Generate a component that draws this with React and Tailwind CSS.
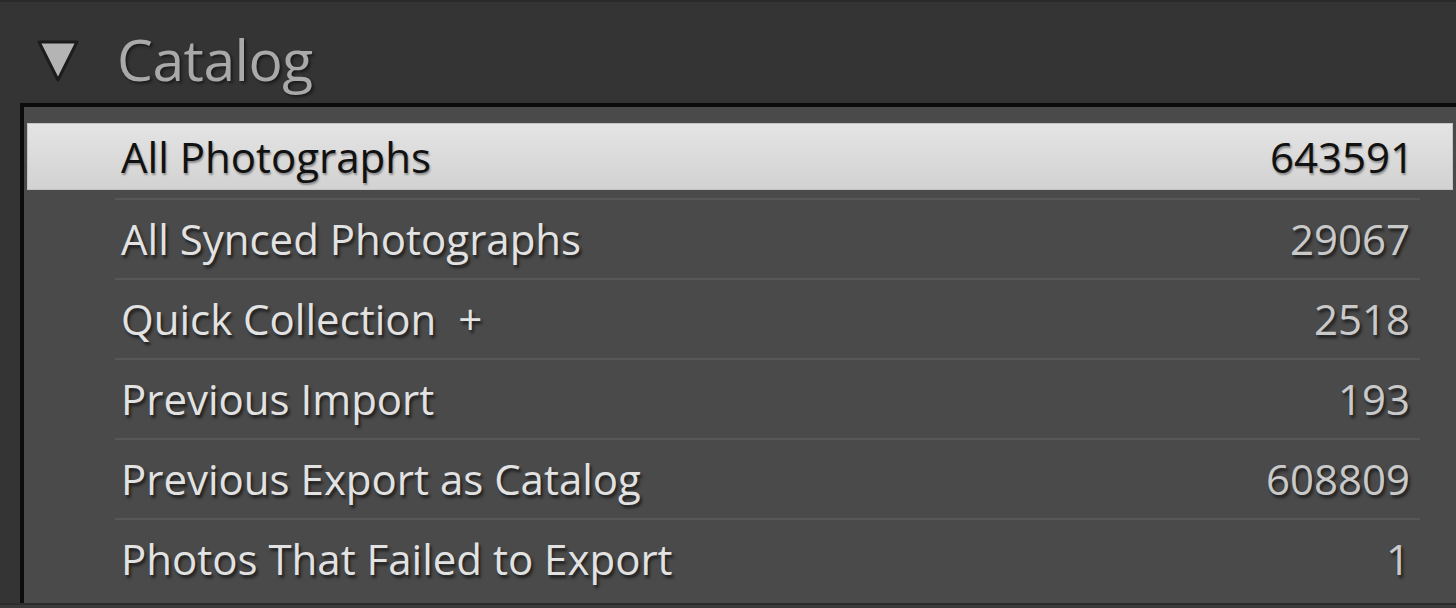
import React from "react";

const rows = [
  ["All Synced Photographs", "29067"],
  ["Quick Collection  +", "2518"],
  ["Previous Import", "193"],
  ["Previous Export as Catalog", "608809"],
  ["Photos That Failed to Export", "1"],
];

export default function App() {
  return (
    <div
      className="w-[1456px] h-[608px] overflow-hidden bg-[#343434] flex flex-col"
      style={{ fontFamily: "'Open Sans', 'Noto Sans', sans-serif" }}
    >
      <div className="h-[103px] shrink-0 flex items-center border-t-2 border-[#2a2a2a]">
        <svg width="46" height="46" viewBox="0 0 46 46" className="ml-[35px] mt-[16px]">
          <polygon points="4,4 42,4 23,42" fill="#b4b4b4" stroke="#1c1c1c" strokeWidth="3" strokeLinejoin="round" />
        </svg>
        <span className="ml-[36px] mt-[14px] text-[57px] text-[#a9a9a9] [text-shadow:2px_2px_3px_#1a1a1a] tracking-[-0.5px]">
          Catalog
        </span>
      </div>
      <div className="flex-1 ml-[20px] border-l-4 border-t-4 border-[#0c0c0c] bg-[#4a4a4a] flex flex-col">
        <div className="pt-[16px] pl-[3px] pr-[3px]">
          <div className="h-[67px] bg-gradient-to-b from-[#e4e4e4] to-[#d2d2d2] border border-[#c4c4c4] flex items-center pl-[93px] pr-[38px] text-[42px] text-[#111] [text-shadow:1px_2px_2px_#8a8a8a]">
            <span className="flex-1">All Photographs</span>
            <span>643591</span>
          </div>
        </div>
        <div className="h-[8px]" />
        <div className="ml-[91px] mr-[36px] flex flex-col">
          {rows.map(([label, count]) => (
            <div
              key={label}
              className="h-[80px] border-t-2 border-[#575757] flex items-center pl-[6px] pr-[10px] pb-[2px] text-[42px] [text-shadow:2px_3px_3px_#1e1e1e]"
            >
              <span className="flex-1 text-[#e2e2e2] whitespace-pre">{label}</span>
              <span className="text-[#c9c9c9]">{count}</span>
            </div>
          ))}
        </div>
      </div>
      <div className="h-[5px] bg-[#3a3a3a] border-t-2 border-[#2c2c2c]" />
    </div>
  );
}
